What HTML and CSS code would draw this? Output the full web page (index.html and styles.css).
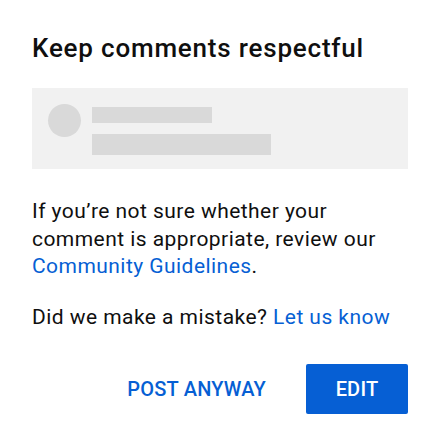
FILE: index.html
```html
<!DOCTYPE html>
<html lang="en">
<head>
    <meta charset="UTF-8">
    <title>Keep comments respectful</title>
    <link rel="stylesheet" href="styles.css">
</head>
<body>
    <div class="dialog">
        <h1>Keep comments respectful</h1>

        <div class="preview">
            <div class="avatar"></div>
            <div class="lines">
                <div class="line short"></div>
                <div class="line long"></div>
            </div>
        </div>

        <p class="message">If you’re not sure whether your comment is appropriate, review our <a href="#">Community Guidelines</a>.</p>

        <p class="message">Did we make a mistake? <a href="#">Let us know</a></p>

        <div class="actions">
            <button class="text-btn">POST ANYWAY</button>
            <button class="primary-btn">EDIT</button>
        </div>
    </div>
</body>
</html>
```

FILE: styles.css
```css
:root {
    --text: #0f0f0f;
    --blue: #065fd4;
    --box: #f1f1f1;
    --skeleton: #d9d9d9;
}

body {
    margin: 0;
    background: #fff;
    color: var(--text);
    font-family: Roboto, 'Liberation Sans', sans-serif;
}

.dialog {
    padding: 0 32px;
}

h1 {
    margin: 0;
    padding-top: 33px;
    font-size: 26px;
    font-weight: 500;
    line-height: 30px;
    letter-spacing: 0.8px;
}

.preview {
    display: flex;
    gap: 11px;
    margin-top: 25px;
    height: 81px;
    padding: 16px 0 0 16px;
    box-sizing: border-box;
    background: var(--box);
}

.avatar {
    width: 33px;
    height: 33px;
    border-radius: 50%;
    background: var(--skeleton);
}

.lines {
    padding-top: 3px;
}

.line {
    background: var(--skeleton);
}

.line.short {
    width: 120px;
    height: 16px;
}

.line.long {
    width: 179px;
    height: 21px;
    margin-top: 11px;
}

.message {
    margin: 0;
    font-size: 21px;
    line-height: 27.5px;
    letter-spacing: 0.45px;
}

.preview + .message {
    margin-top: 29px;
}

.message + .message {
    margin-top: 23px;
}

.message a {
    color: var(--blue);
    text-decoration: none;
}

.actions {
    display: flex;
    justify-content: flex-end;
    align-items: center;
    gap: 40px;
    margin-top: 33px;
}

.actions button {
    border: none;
    font-family: inherit;
    font-size: 20px;
    font-weight: 500;
    letter-spacing: 0.2px;
    cursor: pointer;
}

.text-btn {
    padding: 0;
    background: none;
    color: var(--blue);
}

.primary-btn {
    width: 102px;
    height: 50px;
    border-radius: 2px;
    background: var(--blue);
    color: #fff;
}
```
